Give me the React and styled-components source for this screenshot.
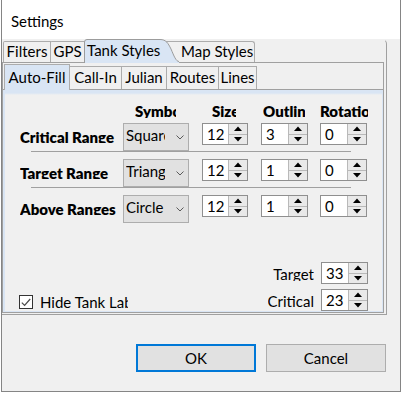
import React from "react";
import styled, { createGlobalStyle } from "styled-components";

const BLUE = "#d9e5f4";
const LINE = "#a0a0a0";
const FONT = `Lato, "Noto Sans", "Liberation Sans", sans-serif`;

const GlobalStyle = createGlobalStyle`
  html, body { margin: 0; padding: 0; background: #ffffff; }
  body { font-family: ${FONT}; font-size: 15px; color: #000; }
  * { box-sizing: border-box; }
`;

const Window = styled.div`
  margin-left: 1px;
  width: 400px;
  height: 392px;
  border: 1px solid #858585;
  border-top: none;
  background: #f0f0f0;
  display: flex;
  flex-direction: column;
`;

const TitleBar = styled.div`
  height: 39px;
  flex: none;
  background: #ffffff;
  padding: 12px 0 0 9px;
  font-size: 15px;
  line-height: 18px;
`;

const OuterFrame = styled.div`
  flex: none;
  width: 385px;
  height: 276px;
  border-top: 1px solid transparent;
  border-right: 1px solid ${LINE};
  border-bottom: 1px solid ${LINE};
  border-top-right-radius: 5px;
  padding: 0 2px 1px 0;
  display: flex;
  flex-direction: column;
`;

const OuterTabs = styled.div`
  height: 22px;
  flex: none;
  display: flex;
  align-items: flex-end;
  padding-left: 1px;
`;

const OuterTab = styled.div`
  position: relative;
  width: ${(p) => p.$w}px;
  height: 21px;
  margin-left: ${(p) => p.$ml || 0}px;
  border: 1px solid #acacac;
  border-bottom: none;
  border-top-left-radius: 2px;
  line-height: 18px;
  text-align: center;
  white-space: nowrap;
`;

const SelectedOuterTab = styled.div`
  position: relative;
  z-index: 2;
  width: ${(p) => p.$w}px;
  height: 24px;
  margin-left: -1px;
  margin-bottom: -1px;
  padding: 2px 0 0 3px;
  line-height: 18px;
  white-space: nowrap;
  & > svg {
    position: absolute;
    left: 0;
    top: 0;
    z-index: -1;
  }
`;

const ShapedTab = styled.div`
  position: relative;
  z-index: 1;
  width: ${(p) => p.$w}px;
  height: 21px;
  margin-left: -15px;
  border-top: 1px solid #acacac;
  border-right: 1px solid #acacac;
  border-top-right-radius: 3px;
  padding-left: 17px;
  line-height: 18px;
  white-space: nowrap;
`;

const OuterPage = styled.div`
  flex: 1;
  border: 1px solid ${LINE};
  display: flex;
  flex-direction: column;
`;

const InnerTabs = styled.div`
  height: 26px;
  flex: none;
  display: flex;
  align-items: flex-end;
  padding-left: 1px;
`;

const InnerTab = styled.div`
  position: relative;
  z-index: ${(p) => (p.$active ? 2 : 1)};
  width: ${(p) => p.$w}px;
  height: ${(p) => (p.$active ? 26 : 23)}px;
  margin-left: ${(p) => (p.$first ? 0 : -1)}px;
  margin-bottom: ${(p) => (p.$active ? -1 : 0)}px;
  background: ${(p) => (p.$active ? BLUE : "#f0f0f0")};
  border: 1px solid #acacac;
  border-bottom: none;
  padding-top: ${(p) => (p.$active ? 3 : 1)}px;
  line-height: 18px;
  text-align: center;
  white-space: nowrap;
`;

const InnerPage = styled.div`
  flex: 1;
  border-top: 1px solid ${LINE};
  background: linear-gradient(to bottom, ${BLUE} 0px, ${BLUE} 3px, #f0f0f0 5px);
  box-shadow: inset 0 0 0 1px ${BLUE}, inset 1px 0 0 1px ${BLUE};
  padding: 12px 15px 1px 17px;
  display: flex;
  flex-direction: column;
`;

const COLS = "103px 79px 59px 59px 47px";

const HeaderRow = styled.div`
  display: grid;
  grid-template-columns: ${COLS};
  height: 16px;
`;

const HeaderCell = styled.div`
  margin-left: ${(p) => p.$offset}px;
  width: ${(p) => p.$w}px;
  height: 16px;
  overflow: hidden;
  white-space: nowrap;
  font-weight: 800;
  line-height: 18px;
`;

const StyleRow = styled.div`
  display: grid;
  grid-template-columns: ${COLS};
  align-items: start;
  height: 28px;
  margin-top: ${(p) => (p.$first ? 5 : 0)}px;
`;

const RowLabel = styled.div`
  margin-top: 5px;
  width: 98px;
  height: 15px;
  overflow: hidden;
  white-space: nowrap;
  font-weight: 800;
  line-height: 18px;
`;

const Separator = styled.div`
  margin: 0 0 7px 11px;
  width: 320px;
  height: 1px;
  background: ${LINE};
`;

const Combo = styled.div`
  width: 66px;
  height: 28px;
  border: 1px solid #adadad;
  background: #e1e1e1;
  display: flex;
  align-items: flex-start;
  padding: 2px 0 0 2px;
`;

const ComboText = styled.div`
  width: 39px;
  overflow: hidden;
  white-space: nowrap;
  line-height: 18px;
`;

const Chevron = styled.svg`
  margin: 9px 0 0 11px;
  flex: none;
`;

const SpinBox = styled.div`
  width: ${(p) => p.$w}px;
  height: 22px;
  display: flex;
  background: #ffffff;
  border: 1px solid #8f8f8f;
`;

const SpinValue = styled.div`
  flex: 1;
  padding-left: 4px;
  line-height: 20px;
  white-space: nowrap;
  overflow: hidden;
`;

const SpinButtons = styled.div`
  width: 19px;
  flex: none;
  display: flex;
  flex-direction: column;
  background: #e9e9e9;
  border-left: 1px solid #b9b9b9;
`;

const SpinButton = styled.div`
  flex: 1;
  display: flex;
  align-items: center;
  justify-content: center;
  border-bottom: ${(p) => (p.$top ? "1px solid #b9b9b9" : "none")};
`;

const Bottom = styled.div`
  margin-top: auto;
  display: flex;
  justify-content: space-between;
  align-items: flex-end;
`;

const CheckRow = styled.label`
  display: flex;
  align-items: center;
  height: 18px;
  margin: 0 0 0 -1px;
  gap: 7px;
`;

const CheckBox = styled.span`
  width: 14px;
  height: 14px;
  flex: none;
  border: 1px solid #333333;
  background: #ffffff;
  display: flex;
  align-items: center;
  justify-content: center;
`;

const CheckText = styled.span`
  width: 88px;
  overflow: hidden;
  white-space: nowrap;
  line-height: 18px;
`;

const LimitGrid = styled.div`
  display: grid;
  grid-template-columns: auto 47px;
  column-gap: 7px;
  row-gap: 5px;
  align-items: start;
`;

const LimitLabel = styled.div`
  margin-top: 3px;
  height: 16px;
  overflow: hidden;
  text-align: right;
  white-space: nowrap;
  line-height: 18px;
`;

const ButtonRow = styled.div`
  margin-top: 29px;
  display: flex;
  justify-content: flex-end;
  gap: 10px;
  padding-right: 14px;
`;

const DialogButton = styled.button`
  width: 120px;
  height: 28px;
  margin: 0;
  padding: 0;
  font-family: ${FONT};
  font-size: 15px;
  line-height: 18px;
  color: #000;
  background: #e1e1e1;
  border: ${(p) => (p.$primary ? "2px solid #0078d7" : "1px solid #adadad")};
`;

function Spinner({ value, w = 47 }) {
  return (
    <SpinBox $w={w}>
      <SpinValue>{value}</SpinValue>
      <SpinButtons>
        <SpinButton $top>
          <svg width="8" height="5" viewBox="0 0 8 5">
            <polygon points="0,5 4,0.5 8,5" fill="#000" />
          </svg>
        </SpinButton>
        <SpinButton>
          <svg width="8" height="5" viewBox="0 0 8 5">
            <polygon points="0,0 8,0 4,4.5" fill="#000" />
          </svg>
        </SpinButton>
      </SpinButtons>
    </SpinBox>
  );
}

function ComboBox({ value }) {
  return (
    <Combo>
      <ComboText>{value}</ComboText>
      <Chevron width="8" height="5" viewBox="0 0 8 5">
        <polyline points="0.5,0.5 4,4 7.5,0.5" fill="none" stroke="#5a5a5a" strokeWidth="1" />
      </Chevron>
    </Combo>
  );
}

const headers = [
  { text: "Symbol", offset: 12, w: 41 },
  { text: "Size", offset: 10, w: 24 },
  { text: "Outline", offset: 2, w: 42 },
  { text: "Rotation", offset: 0, w: 48 },
];

const rows = [
  { label: "Critical Range", symbol: "Square", size: 12, outline: 3, rotation: 0 },
  { label: "Target Range", symbol: "Triangle", size: 12, outline: 1, rotation: 0 },
  { label: "Above Ranges", symbol: "Circle", size: 12, outline: 1, rotation: 0 },
];

const innerTabs = [
  { name: "Auto-Fill", w: 66, active: true },
  { name: "Call-In", w: 53 },
  { name: "Julian", w: 46 },
  { name: "Routes", w: 53 },
  { name: "Lines", w: 39 },
];

export default function App() {
  return (
    <>
      <GlobalStyle />
      <Window>
        <TitleBar>Settings</TitleBar>
        <OuterFrame>
          <OuterTabs>
            <OuterTab $w={48}>Filters</OuterTab>
            <OuterTab $w={35} $ml={-1}>GPS</OuterTab>
            <SelectedOuterTab $w={95}>
              <svg width="95" height="24" viewBox="0 0 95 24">
                <path
                  d="M0.5,24 L0.5,3 Q0.5,0.5 3,0.5 L76,0.5 C82,0.5 84,4 87,10 C90,17 92,22.5 95,22.5 L95,24 Z"
                  fill={BLUE}
                />
                <path
                  d="M0.5,24 L0.5,3 Q0.5,0.5 3,0.5 L76,0.5 C82,0.5 84,4 87,10 C90,17 92,22.5 95,22.5"
                  fill="none"
                  stroke="#9c9c9c"
                  strokeWidth="1"
                />
              </svg>
              Tank Styles
            </SelectedOuterTab>
            <ShapedTab $w={91}>Map Styles</ShapedTab>
          </OuterTabs>
          <OuterPage>
            <InnerTabs>
              {innerTabs.map((t, i) => (
                <InnerTab key={t.name} $w={t.w} $active={t.active} $first={i === 0}>
                  {t.name}
                </InnerTab>
              ))}
            </InnerTabs>
            <InnerPage>
              <HeaderRow>
                <div />
                {headers.map((h) => (
                  <HeaderCell key={h.text} $offset={h.offset} $w={h.w}>
                    {h.text}
                  </HeaderCell>
                ))}
              </HeaderRow>
              {rows.map((r, i) => (
                <React.Fragment key={r.label}>
                  <StyleRow $first={i === 0}>
                    <RowLabel>{r.label}</RowLabel>
                    <ComboBox value={r.symbol} />
                    <Spinner value={r.size} w={46} />
                    <Spinner value={r.outline} />
                    <Spinner value={r.rotation} />
                  </StyleRow>
                  {i < rows.length - 1 && <Separator />}
                </React.Fragment>
              ))}
              <Bottom>
                <CheckRow>
                  <CheckBox>
                    <svg width="10" height="9" viewBox="0 0 10 9">
                      <polyline points="0.8,4.6 3.6,7.4 9.2,1" fill="none" stroke="#4a4a4a" strokeWidth="1.2" />
                    </svg>
                  </CheckBox>
                  <CheckText>Hide Tank Labels</CheckText>
                </CheckRow>
                <LimitGrid>
                  <LimitLabel>Target</LimitLabel>
                  <Spinner value={33} />
                  <LimitLabel>Critical</LimitLabel>
                  <Spinner value={23} />
                </LimitGrid>
              </Bottom>
            </InnerPage>
          </OuterPage>
        </OuterFrame>
        <ButtonRow>
          <DialogButton $primary>OK</DialogButton>
          <DialogButton>Cancel</DialogButton>
        </ButtonRow>
      </Window>
    </>
  );
}
